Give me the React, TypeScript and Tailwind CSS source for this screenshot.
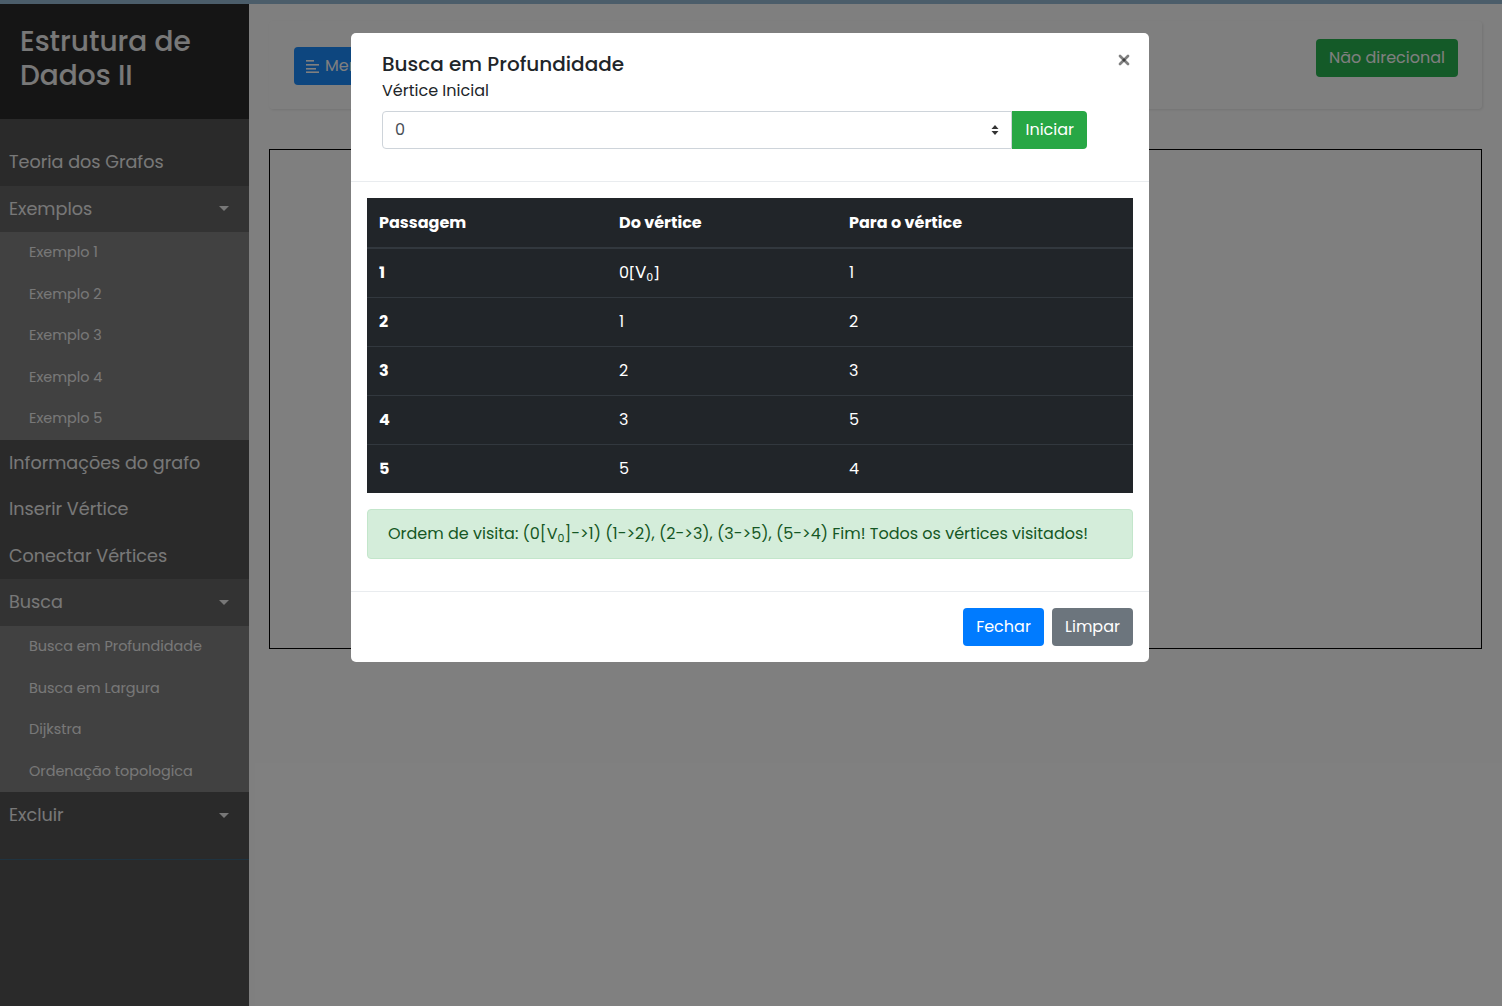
import { X } from "lucide-react";

const font = "font-['Poppins','Open_Sans',sans-serif]";

function Caret() {
  return (
    <span className="block h-0 w-0 border-x-[5px] border-t-[5px] border-x-transparent border-t-[#f0f0f0]" />
  );
}

function MainItem({ label, active, caret }: { label: string; active?: boolean; caret?: boolean }) {
  return (
    <li>
      <a
        className={`flex items-center justify-between py-[10px] pl-[9px] pr-[20px] text-[17.6px] leading-[26.5px] text-[#f0f0f0] ${
          active ? "bg-[#666666]" : ""
        }`}
      >
        <span>{label}</span>
        {caret && <Caret />}
      </a>
    </li>
  );
}

function SubMenu({ items }: { items: string[] }) {
  return (
    <ul className="bg-[#828282]">
      {items.map((s) => (
        <li key={s}>
          <a className="block py-[10px] pl-[29px] text-[14.4px] leading-[21.6px] text-[#f0f0f0]">{s}</a>
        </li>
      ))}
    </ul>
  );
}

const rows = [
  ["1", "0", "1"],
  ["2", "1", "2"],
  ["3", "2", "3"],
  ["4", "3", "5"],
  ["5", "5", "4"],
];

export default function App() {
  return (
    <div className={`relative flex h-screen flex-col overflow-hidden ${font}`}>
      <div className="h-[4px] bg-[#96bbd4]" />
      <div className="flex flex-1">
        {/* sidebar */}
        <nav className="flex w-[249px] flex-col bg-[#545454]">
          <div className="bg-[#2a2a2a] px-[20px] pt-[21px] pb-[26px]">
            <h3 className="text-[28px] leading-[34px] font-medium text-[#f0f0f0]">Estrutura de Dados II</h3>
          </div>
          <ul className="border-b border-[#3e6680] py-[20px]">
            <MainItem label="Teoria dos Grafos" />
            <MainItem label="Exemplos" active caret />
            <SubMenu items={["Exemplo 1", "Exemplo 2", "Exemplo 3", "Exemplo 4", "Exemplo 5"]} />
            <MainItem label="Informações do grafo" />
            <MainItem label="Inserir Vértice" />
            <MainItem label="Conectar Vértices" />
            <MainItem label="Busca" active caret />
            <SubMenu items={["Busca em Profundidade", "Busca em Largura", "Dijkstra", "Ordenação topologica"]} />
            <MainItem label="Excluir" caret />
          </ul>
        </nav>

        {/* content */}
        <main className="flex-1 bg-white px-[20px] pt-[17px]">
          <div className="mb-[40px] flex h-[88px] items-start justify-between rounded bg-white px-[25px] shadow-[1px_1px_3px_rgba(0,0,0,0.1)]">
            <button className="mt-[26px] flex h-[38px] items-center gap-[5px] rounded bg-[#1a8cff] px-3 text-[16px] text-white">
              <svg width="14" height="14" viewBox="0 0 14 14" fill="currentColor">
                <rect x="0" y="1" width="8" height="1.6" />
                <rect x="0" y="5" width="13" height="1.6" />
                <rect x="0" y="9" width="10" height="1.6" />
                <rect x="0" y="12.4" width="13" height="1.6" />
              </svg>
              Menu
            </button>
            <button className="mt-[18px] mr-[-1px] h-[38px] rounded bg-[#28b450] px-[13px] text-[16px] text-white">
              Não direcional
            </button>
          </div>
          <div className="h-[500px] border border-black" />
        </main>
      </div>

      {/* modal */}
      <div className="absolute inset-0 flex justify-center bg-black/50 pt-[33px] pr-[2px]">
        <div className="h-fit w-[798px] rounded-[5px] bg-white">
          <div className="flex border-b border-[#e9ecef] p-4">
            <div className="w-[720px] pl-[15px] pb-4">
              <h5 className="text-[20px] leading-[30px] font-medium text-[#212529]">Busca em Profundidade</h5>
              <label className="mb-2 block text-[16px] leading-6 text-[#212529]">Vértice Inicial</label>
              <div className="flex h-[38px]">
                <div className="flex flex-1 items-center justify-between rounded-l border border-[#ced4da] pr-[12px] pl-[12px] text-[16px] text-[#495057]">
                  <span>0</span>
                  <svg width="8" height="12" viewBox="0 0 8 12">
                    <path d="M4 1 L7.5 5 H0.5 Z M4 11 L7.5 7 H0.5 Z" fill="#333" />
                  </svg>
                </div>
                <button className="rounded-r bg-[#28a745] px-[13px] text-[16px] text-white">Iniciar</button>
              </div>
            </div>
            <button className="mt-[3px] mr-[1px] ml-auto flex h-[16px] w-[16px] items-center justify-center text-black/50">
              <X size={16} strokeWidth={4} />
            </button>
          </div>

          <div className="p-4">
            <table className="w-full border-collapse bg-[#212529] text-left text-[16px] text-white">
              <thead>
                <tr className="border-b-2 border-[#32383e]">
                  <th className="w-[240px] px-3 pt-[13px] pb-3 leading-6 font-bold">Passagem</th>
                  <th className="w-[230px] px-3 pt-[13px] pb-3 leading-6 font-bold">Do vértice</th>
                  <th className="px-3 pt-[13px] pb-3 leading-6 font-bold">Para o vértice</th>
                </tr>
              </thead>
              <tbody>
                {rows.map((r, i) => (
                  <tr key={r[0]} className={i > 0 ? "border-t border-[#32383e]" : ""}>
                    <td className="px-3 py-3 leading-6 font-bold">{r[0]}</td>
                    <td className="px-3 py-3 leading-6">
                      {r[1]}
                      {i === 0 && (
                        <span className="font-['DejaVu_Sans',sans-serif]">
                          [V<sub className="text-[11px]">0</sub>]
                        </span>
                      )}
                    </td>
                    <td className="px-3 py-3 leading-6">{r[2]}</td>
                  </tr>
                ))}
              </tbody>
            </table>

            <div className="mt-4 mb-4 rounded border border-[#c3e6cb] bg-[#d4edda] px-5 py-3 text-[16px] leading-6 text-[#155724]">
              Ordem de visita: (0[V<sub className="text-[11px]">0</sub>]-&gt;1) (1-&gt;2), (2-&gt;3), (3-&gt;5), (5-&gt;4) Fim! Todos os
              vértices visitados!
            </div>
          </div>

          <div className="flex justify-end gap-2 border-t border-[#e9ecef] p-4">
            <button className="h-[38px] w-[81px] rounded bg-[#007bff] text-[16px] text-white">Fechar</button>
            <button className="h-[38px] w-[81px] rounded bg-[#6c757d] text-[16px] text-white">Limpar</button>
          </div>
        </div>
      </div>
    </div>
  );
}
